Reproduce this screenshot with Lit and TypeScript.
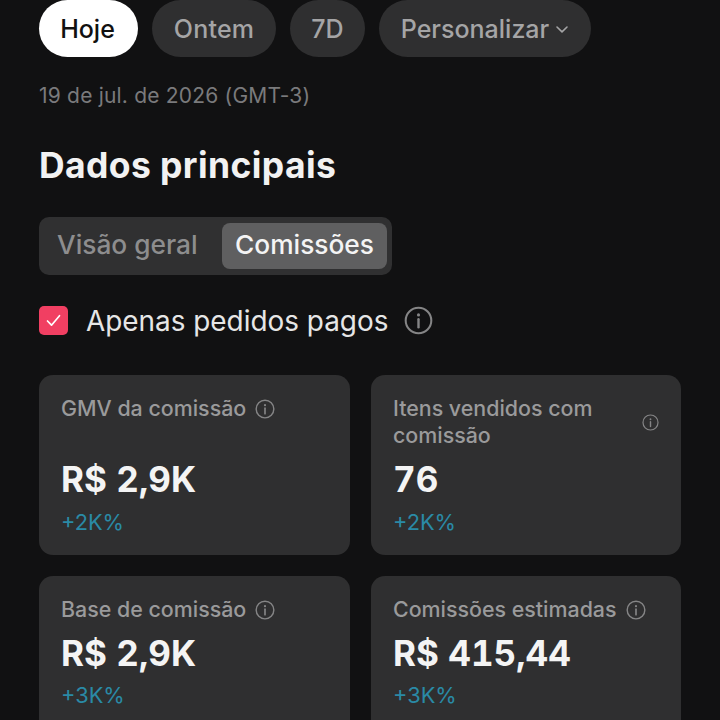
import { LitElement, html, css } from "lit";
import { customElement } from "lit/decorators.js";

const info = (cls: string) => html`<svg class="info ${cls}" viewBox="0 0 24 24" fill="none" stroke="currentColor">
  <circle cx="12" cy="12" r="10.6" stroke-width="1.7"></circle>
  <circle cx="12" cy="7.4" r="1.3" fill="currentColor" stroke="none"></circle>
  <path d="M12 11v6.6" stroke-width="2" stroke-linecap="round"></path>
</svg>`;

@customElement("app-root")
export class AppRoot extends LitElement {
  static styles = css`
    :host {
      display: block;
      width: 720px;
      height: 720px;
      overflow: hidden;
      background: #111112;
      font-family: Inter, "Noto Sans", sans-serif;
      color: #fff;
    }
    .page { display: flex; flex-direction: column; padding: 0 39px; }
    .chips { display: flex; gap: 14px; }
    .chip {
      height: 57px;
      border-radius: 29px;
      display: flex;
      align-items: center;
      justify-content: center;
      gap: 6px;
      box-sizing: border-box;
      background: #2f2f30;
      color: #a5a5a6;
      font-size: 25px;
      font-weight: 500;
      white-space: nowrap;
    }
    .chip.on { background: #fff; color: #111; width: 99px; padding-right: 2px; }
    .chip.w2 { width: 124px; letter-spacing: 0.2px; }
    .chip.w3 { width: 75px; }
    .chip.w4 { width: 212px; }
    .chip svg { width: 14px; height: 14px; }
    .date { margin-top: 25px; font-size: 21px; letter-spacing: 0.2px; line-height: 28px; color: #7a7a7c; }
    h1 { margin: 35px 0 0; font-size: 35.5px; letter-spacing: 0.4px; line-height: 42px; font-weight: 650; color: #f2f2f2; }
    .tabs {
      margin-top: 30px;
      align-self: flex-start;
      width: 353px;
      height: 58px;
      box-sizing: border-box;
      padding: 6px 5px 6px 18px;
      border-radius: 10px;
      background: #303031;
      display: flex;
      justify-content: space-between;
      align-items: stretch;
      font-size: 26.3px;
      font-weight: 500;
    }
    .tabs span { display: flex; align-items: center; padding-bottom: 3px; box-sizing: border-box; color: #8d8d8e; }
    .tabs .active {
      width: 165px;
      justify-content: center;
      border-radius: 8px;
      background: #5f5f60;
      color: #f4f4f4;
    }
    .check { margin-top: 31px; display: flex; align-items: center; height: 29px; font-size: 27.9px; color: #e6e6e6; }
    .box {
      width: 29px;
      height: 29px;
      border-radius: 5px;
      background: #f13f62;
      display: flex;
      align-items: center;
      justify-content: center;
      margin-right: 18px;
    }
    .box svg { width: 17px; height: 17px; }
    .info { color: #858586; flex: none; }
    .info.lg { width: 29px; height: 29px; margin-left: 16px; }
    .info.sm { width: 20px; height: 20px; margin-left: 9px; }
    .info.xs { width: 17px; height: 17px; margin-left: 9px; }
    .grid {
      margin-top: 40px;
      display: grid;
      grid-template-columns: 311px 310px;
      column-gap: 21px;
      row-gap: 21px;
    }
    .card {
      box-sizing: border-box;
      height: 180px;
      padding: 20px 22px 0;
      background: #2f2f30;
      border-radius: 14px;
      display: flex;
      flex-direction: column;
    }
    .label {
      display: flex;
      align-items: center;
      min-height: 27px;
      font-size: 21.4px;
      line-height: 27px;
      font-weight: 500;
      color: #9a9a9b;
    }
    .label.two { justify-content: space-between; }
    .value { margin-top: 36px; font-size: 35px; line-height: 42px; font-weight: 700; font-feature-settings: "tnum"; color: #f4f4f4; }
    .card.two .value { margin-top: 9px; }
    .card.low .value { margin-top: 9px; }
    .delta { margin-top: 8px; font-size: 21.8px; line-height: 28px; color: #2a8aa6; }
    .card.low .delta { margin-top: 7px; }
  `;

  private card(label: string, value: string, delta: string, cls = "", icon = "sm") {
    return html`<div class="card ${cls}">
      <div class="label ${cls}">${label}${info(icon)}</div>
      <div class="value">${value}</div>
      <div class="delta">${delta}</div>
    </div>`;
  }

  render() {
    return html`<div class="page">
      <div class="chips">
        <div class="chip on">Hoje</div>
        <div class="chip w2">Ontem</div>
        <div class="chip w3">7D</div>
        <div class="chip w4">Personalizar
          <svg viewBox="0 0 14 14" fill="none" stroke="currentColor" stroke-width="1.6" stroke-linecap="round" stroke-linejoin="round"><path d="M2 5l5 4.8L12 5"></path></svg>
        </div>
      </div>
      <div class="date">19 de jul. de 2026 (GMT-3)</div>
      <h1>Dados principais</h1>
      <div class="tabs"><span>Visão geral</span><span class="active">Comissões</span></div>
      <div class="check">
        <div class="box"><svg viewBox="0 0 17 17" fill="none" stroke="#fff" stroke-width="1.7" stroke-linecap="round" stroke-linejoin="round"><path d="M2.5 9l4 4.2 8-9.5"></path></svg></div>
        Apenas pedidos pagos${info("lg")}
      </div>
      <div class="grid">
        ${this.card("GMV da comissão", "R$ 2,9K", "+2K%")}
        ${this.card("Itens vendidos com comissão", "76", "+2K%", "two", "xs")}
        ${this.card("Base de comissão", "R$ 2,9K", "+3K%", "low")}
        ${this.card("Comissões estimadas", "R$ 415,44", "+3K%", "low")}
      </div>
    </div>`;
  }
}
